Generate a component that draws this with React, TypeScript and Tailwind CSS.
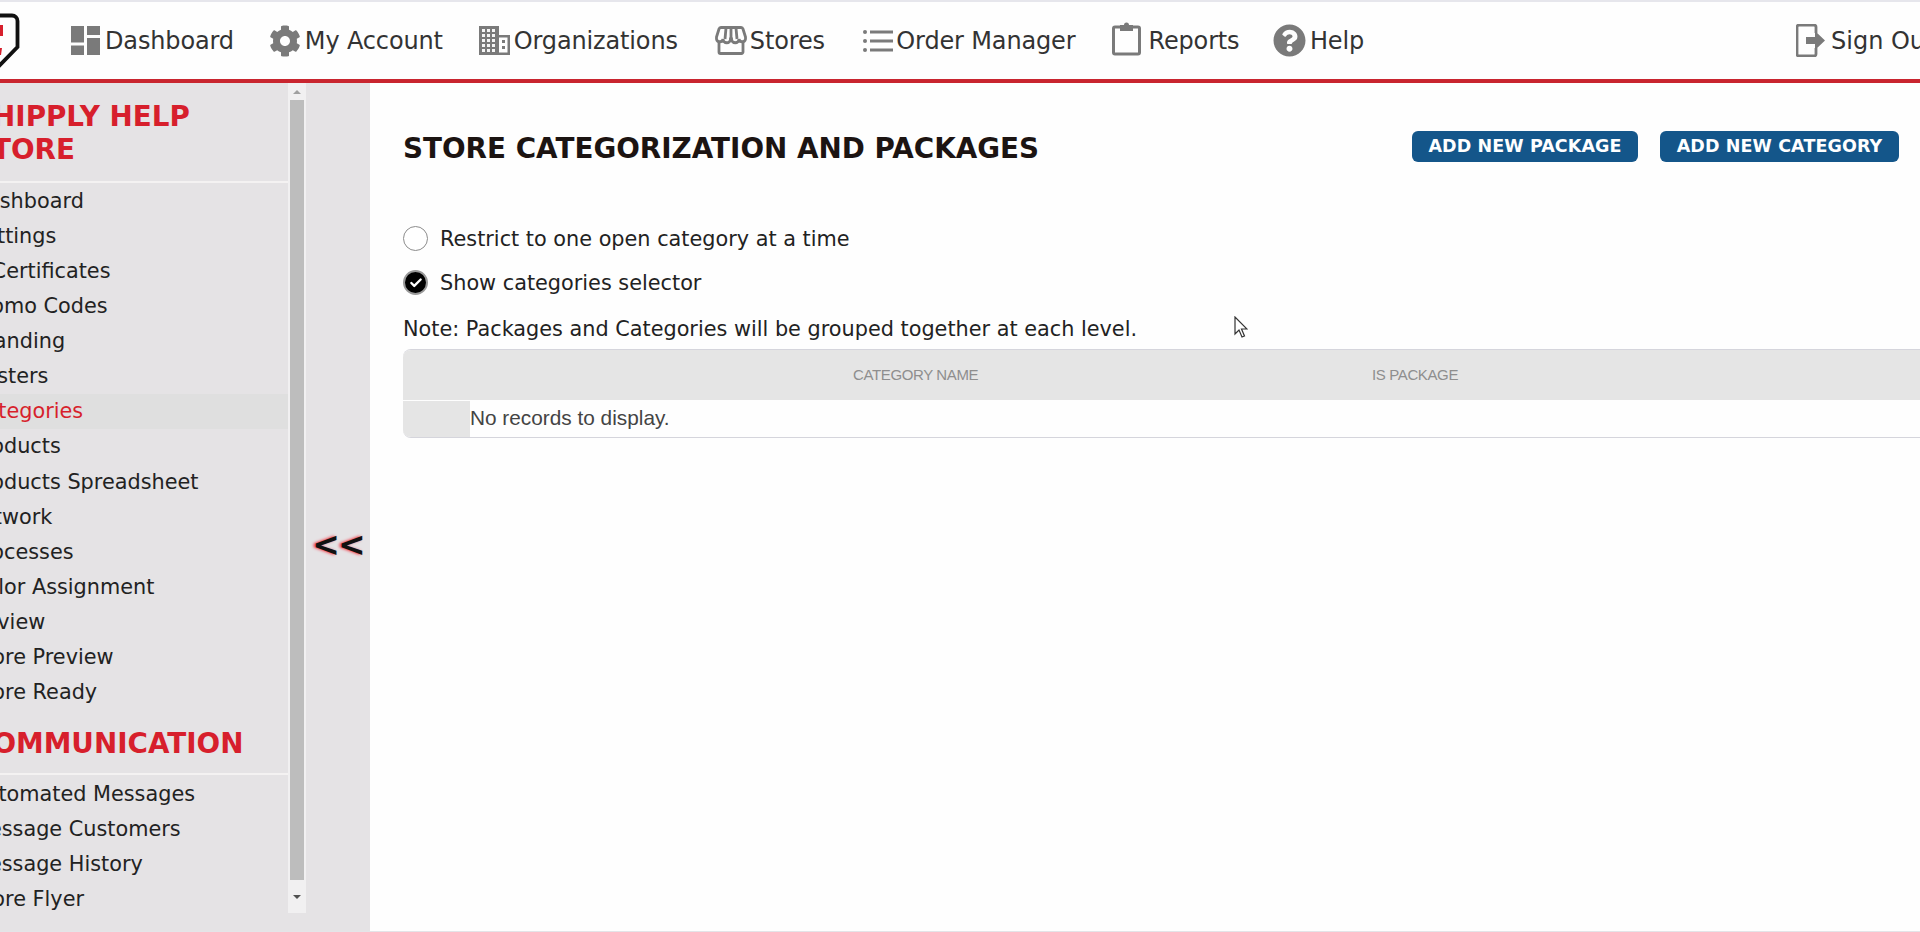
import React from "react";
import { Check } from "lucide-react";
import { FaCog, FaQuestionCircle } from "react-icons/fa";

const sans = "font-['DejaVu_Sans',Verdana,sans-serif]";

// top nav entries with hand drawn icons
const GridIcon = () => (
  <svg viewBox="0 0 29 29" className="w-[29px] h-[29px] fill-[#7a7a7a]">
    <rect x="0" y="0" width="13" height="16.500" />
    <rect x="16" y="0" width="13" height="9" />
    <rect x="0" y="19.500" width="13" height="9.500" />
    <rect x="16" y="12" width="13" height="17" />
  </svg>
);

const BuildingIcon = () => (
  <svg viewBox="0 0 31 29" className="w-[31px] h-[29px] mr-[1px]">
    <path d="M0 0h20v29H0z" fill="#7a7a7a" />
    <path d="M20 10.250h9.750v17.500H20" fill="none" stroke="#7a7a7a" strokeWidth="2.500" />
    <g fill="#f4f4f4">
      {[3, 8, 13].map((x) =>
        [3, 8, 13, 18, 23].map((y) => <rect key={`${x}-${y}`} x={x} y={y} width="3" height="3" />)
      )}
    </g>
    <g fill="#7a7a7a">
      <rect x="23" y="14" width="3" height="3" />
      <rect x="23" y="20" width="3" height="3" />
    </g>
  </svg>
);

const StoreIcon = () => (
  <svg viewBox="0 0 32 29" className="w-[32px] h-[29px]" fill="none" stroke="#7a7a7a" strokeWidth="2.800">
    <path d="M4 16v10a1.500 1.500 0 001.500 1.500h21A1.500 1.500 0 0028 26V16" />
    <path d="M6 1.500h20a2 2 0 012 1.500l2.500 8v2a3.300 3.300 0 01-6.500 0 3.700 3.700 0 01-7.500 0h-1a3.700 3.700 0 01-7.500 0 3.300 3.300 0 01-6.500 0v-2L4 3a2 2 0 012-1.500z" />
    <path d="M11 2l-1 11M16 2v11M21 2l1 11" />
  </svg>
);

const ListIcon = () => (
  <svg viewBox="0 0 30 24" className="w-[30px] h-[24px] fill-[#7a7a7a]">
    <circle cx="2" cy="3" r="2" />
    <circle cx="2" cy="12" r="2" />
    <circle cx="2" cy="21" r="2" />
    <rect x="7" y="1.500" width="23" height="3" />
    <rect x="7" y="10.500" width="23" height="3" />
    <rect x="7" y="19.500" width="23" height="3" />
  </svg>
);

const ClipboardIcon = () => (
  <svg viewBox="0 0 29 35" className="w-[29px] h-[35px] mb-[4px]">
    <path d="M8 6H3a1.500 1.500 0 00-1.500 1.500v24A1.500 1.500 0 003 33h23a1.500 1.500 0 001.500-1.500v-24A1.500 1.500 0 0026 6h-5" fill="none" stroke="#7a7a7a" strokeWidth="3" />
    <path d="M8 10V4h4a2.500 2.500 0 015 0h4v6z" fill="#7a7a7a" />
  </svg>
);

const SignOutIcon = () => (
  <svg viewBox="0 0 29 33" className="w-[29px] h-[33px]">
    <path d="M20 9V3a2 2 0 00-2-2H3a2 2 0 00-2 2v27a2 2 0 002 2h15a2 2 0 002-2v-6" fill="none" stroke="#7a7a7a" strokeWidth="2.800" />
    <path d="M10 13h9V7l10 9.500-10 9.500v-6h-9z" fill="#7a7a7a" />
  </svg>
);

const navItems = [
  { label: "Dashboard", icon: <GridIcon />, cls: "mr-[35px] gap-[5px]" },
  { label: "My Account", icon: <FaCog className="w-[32px] h-[32px] text-[#7a7a7a]" />, cls: "mr-[36px] gap-[4px]" },
  { label: "Organizations", icon: <BuildingIcon />, cls: "mr-[37px] gap-[3px]" },
  { label: "Stores", icon: <StoreIcon />, cls: "mr-[38.500px] gap-[3px]" },
  { label: "Order Manager", icon: <ListIcon />, cls: "mr-[37px] gap-[3px]" },
  { label: "Reports", icon: <ClipboardIcon />, cls: "mr-[33.500px] gap-[7px]" },
  { label: "Help", icon: <FaQuestionCircle className="w-[33px] h-[33px] text-[#7a7a7a]" />, cls: "gap-[4px]" },
];

const storeLinks = [
  "Dashboard",
  "Settings",
  "Gift Certificates",
  "Promo Codes",
  "Branding",
  "Rosters",
  "Categories",
  "Products",
  "Products Spreadsheet",
  "Artwork",
  "Processes",
  "Color Assignment",
  "Review",
  "Store Preview",
  "Store Ready",
];

const commLinks = ["Automated Messages", "Message Customers", "Message History", "Store Flyer"];

const SideLink = ({ label }: { label: string }) => (
  <div
    className={`h-[35.070px] leading-[35px] text-[20.800px] whitespace-nowrap ${
      label === "Gift Certificates" ? "pl-[2px]" : "pl-[25px]"
    } ${label === "Categories" ? "bg-[#dfdfdf] text-[#d71f2c]" : "text-[#222]"}`}
  >
    {label}
  </div>
);

export default function App() {
  return (
    <div className={`h-[932px] w-[1920px] overflow-hidden bg-[#fefefe] flex flex-col ${sans}`}>
      {/* top bar */}
      <header className="h-[83px] shrink-0 border-t-2 border-[#e6e6ec] border-b-[4px] border-b-[#c9252f] flex items-center relative overflow-hidden">
        <svg viewBox="0 0 24 70" className="absolute left-0 top-0 w-[24px] h-[70px]">
          <path d="M-5 13.500H12a5.500 5.500 0 015.500 5.500v26L-3 66" fill="none" stroke="#111" strokeWidth="3.800" />
          <path d="M0 23h3v11l-3 0zM0 46h2l-1 7h-1z" fill="#d71f2c" />
        </svg>
        <nav className="flex items-center pl-[71px] text-[24px] text-[#333] tracking-[-0.150px]">
          {navItems.map((item) => (
            <div key={item.label} className={`flex items-center ${item.cls}`}>
              {item.icon}
              <span>{item.label}</span>
            </div>
          ))}
        </nav>
        <div className="absolute left-[1796px] flex items-center gap-[6px] text-[24px] text-[#333] whitespace-nowrap">
          <SignOutIcon />
          <span>Sign Out</span>
        </div>
      </header>

      <div className="flex flex-1 min-h-0 border-b border-[#e4e4e8]">
        {/* left column, list is scrolled sideways so the text starts cut off */}
        <aside className="w-[370px] shrink-0 flex bg-[#e5e3e5]">
          <div className="w-[288px] shrink-0 h-[840px] overflow-hidden">
            <div className="ml-[-54px] w-[342px]">
              <h2 className="pl-[26px] pt-[17px] pb-[15px] text-[27.800px] leading-[33px] font-bold text-[#d71f2c] border-b-2 border-[#f4f2f2]">
                SHIPPLY HELP
                <br />
                STORE
              </h2>
              <div className="pt-[1px]">
                {storeLinks.map((l) => (
                  <SideLink key={l} label={l} />
                ))}
              </div>
              <h2 className="pl-[26px] pt-[17px] pb-[13px] text-[27.800px] leading-[33px] font-bold text-[#d71f2c] border-b-2 border-[#f4f2f2]">
                COMMUNICATION
              </h2>
              <div className="pt-[2px]">
                {commLinks.map((l) => (
                  <SideLink key={l} label={l} />
                ))}
              </div>
            </div>
          </div>

          {/* fake scrollbar */}
          <div className="w-[18px] h-[830px] shrink-0 flex flex-col bg-[#f1f0f1]">
            <div className="h-[17px] flex items-center justify-center">
              <div className="border-x-[4px] border-x-transparent border-b-[4px] border-b-[#a0a0a0]" />
            </div>
            <div className="mx-[2px] w-[14px] h-[780px] bg-[#bdbdbd]" />
            <div className="flex-1 flex items-center justify-center">
              <div className="border-x-[4px] border-x-transparent border-t-[4px] border-t-[#505050]" />
            </div>
          </div>

          <div className="flex-1 flex justify-center pt-[442px]">
            <span className="h-[40px] text-[33px] leading-[40px] font-bold text-[#111] tracking-[-2px] [text-shadow:-2px_0_3px_#f03040]">
              &lt;&lt;
            </span>
          </div>
        </aside>

        {/* main content */}
        <main className="flex-1 min-w-0 pl-[33px] relative">
          <div className="flex items-center justify-between pt-[47px] pr-[21px]">
            <h1 className="text-[27.800px] font-bold text-[#1c1412] leading-[33px] relative top-[2px]">
              STORE CATEGORIZATION AND PACKAGES
            </h1>
            <div className="flex gap-[22px]">
              <button className="h-[31px] w-[226px] rounded-[6px] bg-[#14568a] text-white text-[17.500px] font-bold tracking-[0.100px]">
                ADD NEW PACKAGE
              </button>
              <button className="h-[31px] w-[239px] rounded-[6px] bg-[#14568a] text-white text-[17.500px] font-bold tracking-[0.100px]">
                ADD NEW CATEGORY
              </button>
            </div>
          </div>

          <div className="mt-[63px] flex items-center gap-[12px] h-[25px] text-[20.800px] text-[#222]">
            <span className="w-[25px] h-[25px] rounded-full border border-[#8c8c8c] bg-white" />
            <span className="pt-[2px]">Restrict to one open category at a time</span>
          </div>
          <div className="mt-[19px] flex items-center gap-[12px] h-[25px] text-[20.800px] text-[#222]">
            <span className="w-[25px] h-[25px] rounded-full bg-black border-2 border-[#999] flex items-center justify-center">
              <Check className="w-[14px] h-[14px] text-white" strokeWidth={4} />
            </span>
            <span className="pt-[2px]">Show categories selector</span>
          </div>
          <p className="mt-[20px] text-[20.800px] leading-[28px] text-[#222]">
            Note: Packages and Categories will be grouped together at each level.
          </p>

          {/* empty table, runs off the right edge */}
          <div className="mt-[6px] w-[1530px] border-t border-b border-[#d5d5dc] rounded-l-[8px] overflow-hidden font-['Liberation_Sans',Arial,sans-serif]">
            <div className="h-[50px] bg-[#e5e5e5] flex items-center text-[15px] text-[#8e8e8e] tracking-[-0.370px]">
              <span className="ml-[450px] w-[519px]">CATEGORY NAME</span>
              <span>IS PACKAGE</span>
            </div>
            <div className="h-[37px] flex text-[20.800px] text-[#444] pt-[1px]">
              <div className="w-[67px] bg-[#e5e5e5]" />
              <span className="leading-[34px]">No records to display.</span>
            </div>
          </div>

          {/* mouse pointer */}
          <svg viewBox="0 0 14 22" className="absolute left-[864px] top-[233px] w-[14px] h-[22px]">
            <path d="M1 1v17l4-4 3 7 2.500-1-3-7h5.500z" fill="#fff" stroke="#333" strokeWidth="1.200" />
          </svg>
        </main>
      </div>
    </div>
  );
}
